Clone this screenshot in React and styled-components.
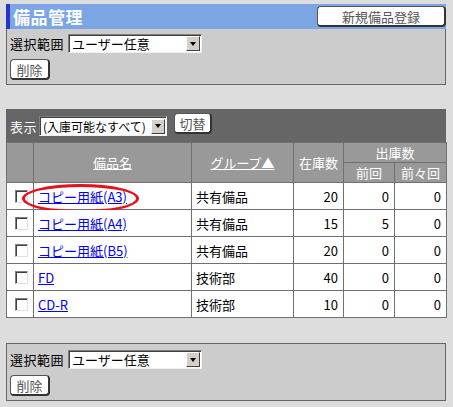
import React from "react";
import styled, { createGlobalStyle } from "styled-components";

const GlobalStyle = createGlobalStyle`
  body {
    margin: 0;
    background: #dddddd;
    font-family: "Noto Sans CJK JP", "DejaVu Sans", sans-serif;
    font-size: 12px;
    color: #000;
  }
`;

const Page = styled.div`
  width: 440px;
  padding: 4px 0 0 6px;
`;

const TitleBar = styled.div`
  height: 25px;
  background: #7ba6e3;
  border-left: 4px solid #2a36c2;
  display: flex;
  align-items: center;
  justify-content: space-between;
  box-sizing: border-box;
`;

const Title = styled.h1`
  margin: 0 0 0 3px;
  color: #fff;
  font-size: 17px;
  font-weight: bold;
  letter-spacing: 0.5px;
`;

const Button = styled.button`
  font-family: inherit;
  font-size: 13px;
  color: #555;
  background: #fff;
  border: 1px solid #555;
  border-right: 2px solid #333;
  border-bottom: 2px solid #333;
  border-radius: 4px;
  padding: 0;
  width: ${(p) => p.$w}px;
  height: ${(p) => p.$h || 21}px;
  line-height: 1;
  cursor: pointer;
  align-self: ${(p) => p.$raise ? "flex-start" : "auto"};
  margin-top: ${(p) => p.$raise ? "3px" : "0"};
`;

const Panel = styled.div`
  background: #cccccc;
  border: 1px solid #666;
  border-top: ${(p) => (p.$noTop ? "none" : "1px solid #666")};
  padding: ${(p) => (p.$noTop ? "5px 0 4px 3px" : "6px 0 4px 3px")};
  margin-top: ${(p) => p.$mt || 0}px;
  display: flex;
  flex-direction: column;
  align-items: flex-start;
  gap: 6px;
`;

const Row = styled.div`
  display: flex;
  align-items: center;
  gap: ${(p) => p.$gap || 4}px;
`;

const Label = styled.span`
  color: ${(p) => (p.$light ? "#fff" : "#000")};
  font-size: 13px;
  letter-spacing: 0.5px;
`;

const SelectBox = styled.div`
  width: ${(p) => p.$w}px;
  height: ${(p) => p.$h || 19}px;
  box-sizing: border-box;
  background: #fff;
  border: 1px solid #808080;
  border-right-color: #f0f0f0;
  border-bottom-color: #f0f0f0;
  box-shadow: inset 1px 1px 0 #404040;
  display: flex;
  align-items: center;
  justify-content: space-between;
  padding-left: 3px;
  font-size: ${(p) => p.$fs || 13}px;
  white-space: nowrap;
  overflow: hidden;
`;

const Arrow = styled.span`
  flex: none;
  width: 14px;
  height: 15px;
  margin-right: 1px;
  background: #d4d0c8;
  border: 1px solid;
  border-color: #fff #404040 #404040 #fff;
  box-sizing: border-box;
  display: flex;
  align-items: center;
  justify-content: center;
  &::after {
    content: "";
    border-left: 3.5px solid transparent;
    border-right: 3.5px solid transparent;
    border-top: 4px solid #000;
  }
`;

const Toolbar = styled.div`
  margin-top: 24px;
  background: #666666;
  height: 33px;
  border: 1px solid #666;
  border-bottom: none;
  box-sizing: border-box;
  display: flex;
  align-items: center;
  padding-left: 3px;
  gap: 7px;
`;

const Table = styled.table`
  width: 440px;
  border-collapse: collapse;
  table-layout: fixed;
`;

const Th = styled.th`
  background: #999999;
  color: #fff;
  font-weight: normal;
  font-size: 13px;
  border: 1px solid #707070;
  height: ${(p) => p.$h || 19}px;
  padding: 0;
  text-align: center;
`;

const HeadLink = styled.a`
  color: #fff;
  text-decoration: underline;
`;

const Td = styled.td`
  background: #fff;
  border: 1px solid #707070;
  height: 26px;
  padding: 0 ${(p) => (p.$num ? 5 : 4)}px 0 4px;
  text-align: ${(p) => (p.$num ? "right" : "left")};
  font-size: 13px;
  position: relative;
`;

const Check = styled.span`
  display: block;
  width: 13px;
  height: 13px;
  margin-left: 4px;
  box-sizing: border-box;
  background: #fff;
  border: 1px solid;
  border-color: #808080 #e0e0e0 #e0e0e0 #808080;
  box-shadow: inset 1px 1px 0 #404040;
`;

const ItemLink = styled.a`
  color: #0000ee;
  text-decoration: underline;
  position: relative;
  z-index: 1;
`;

const Circle = styled.span`
  position: absolute;
  left: -12px;
  top: 1px;
  width: 111px;
  height: 23px;
  border: 3px solid #e8111a;
  border-radius: 50%;
  pointer-events: none;
`;

const rows = [
  { name: "コピー用紙(A3)", group: "共有備品", stock: 20, prev: 0, prev2: 0, mark: true },
  { name: "コピー用紙(A4)", group: "共有備品", stock: 15, prev: 5, prev2: 0 },
  { name: "コピー用紙(B5)", group: "共有備品", stock: 20, prev: 0, prev2: 0 },
  { name: "FD", group: "技術部", stock: 40, prev: 0, prev2: 0 },
  { name: "CD-R", group: "技術部", stock: 10, prev: 0, prev2: 0 },
];

function RangePanel({ mt, noTop }) {
  return (
    <Panel $mt={mt} $noTop={noTop}>
      <Row>
        <Label>選択範囲</Label>
        <SelectBox $w={134}>
          ユーザー任意
          <Arrow />
        </SelectBox>
      </Row>
      <Button $w={40}>削除</Button>
    </Panel>
  );
}

export default function App() {
  return (
    <Page>
      <GlobalStyle />
      <TitleBar>
        <Title>備品管理</Title>
        <Button $w={129}>新規備品登録</Button>
      </TitleBar>
      <RangePanel noTop />

      <Toolbar>
        <Row $gap={2}>
          <Label $light>表示</Label>
          <SelectBox $w={128} $h={20} $fs={12}>
            (入庫可能なすべて)
            <Arrow />
          </SelectBox>
        </Row>
        <Button $w={38} $raise>切替</Button>
      </Toolbar>
      <Table>
        <colgroup>
          <col style={{ width: 27 }} />
          <col style={{ width: 158 }} />
          <col style={{ width: 102 }} />
          <col style={{ width: 50 }} />
          <col style={{ width: 51 }} />
          <col style={{ width: 52 }} />
        </colgroup>
        <thead>
          <tr>
            <Th rowSpan={2} />
            <Th rowSpan={2}><HeadLink>備品名</HeadLink></Th>
            <Th rowSpan={2}><HeadLink>グループ▲</HeadLink></Th>
            <Th rowSpan={2}>在庫数</Th>
            <Th colSpan={2}>出庫数</Th>
          </tr>
          <tr>
            <Th>前回</Th>
            <Th>前々回</Th>
          </tr>
        </thead>
        <tbody>
          {rows.map((r) => (
            <tr key={r.name}>
              <Td><Check /></Td>
              <Td>
                {r.mark && <Circle />}
                <ItemLink>{r.name}</ItemLink>
              </Td>
              <Td>{r.group}</Td>
              <Td $num>{r.stock}</Td>
              <Td $num>{r.prev}</Td>
              <Td $num>{r.prev2}</Td>
            </tr>
          ))}
        </tbody>
      </Table>

      <RangePanel mt={25} />
    </Page>
  );
}
